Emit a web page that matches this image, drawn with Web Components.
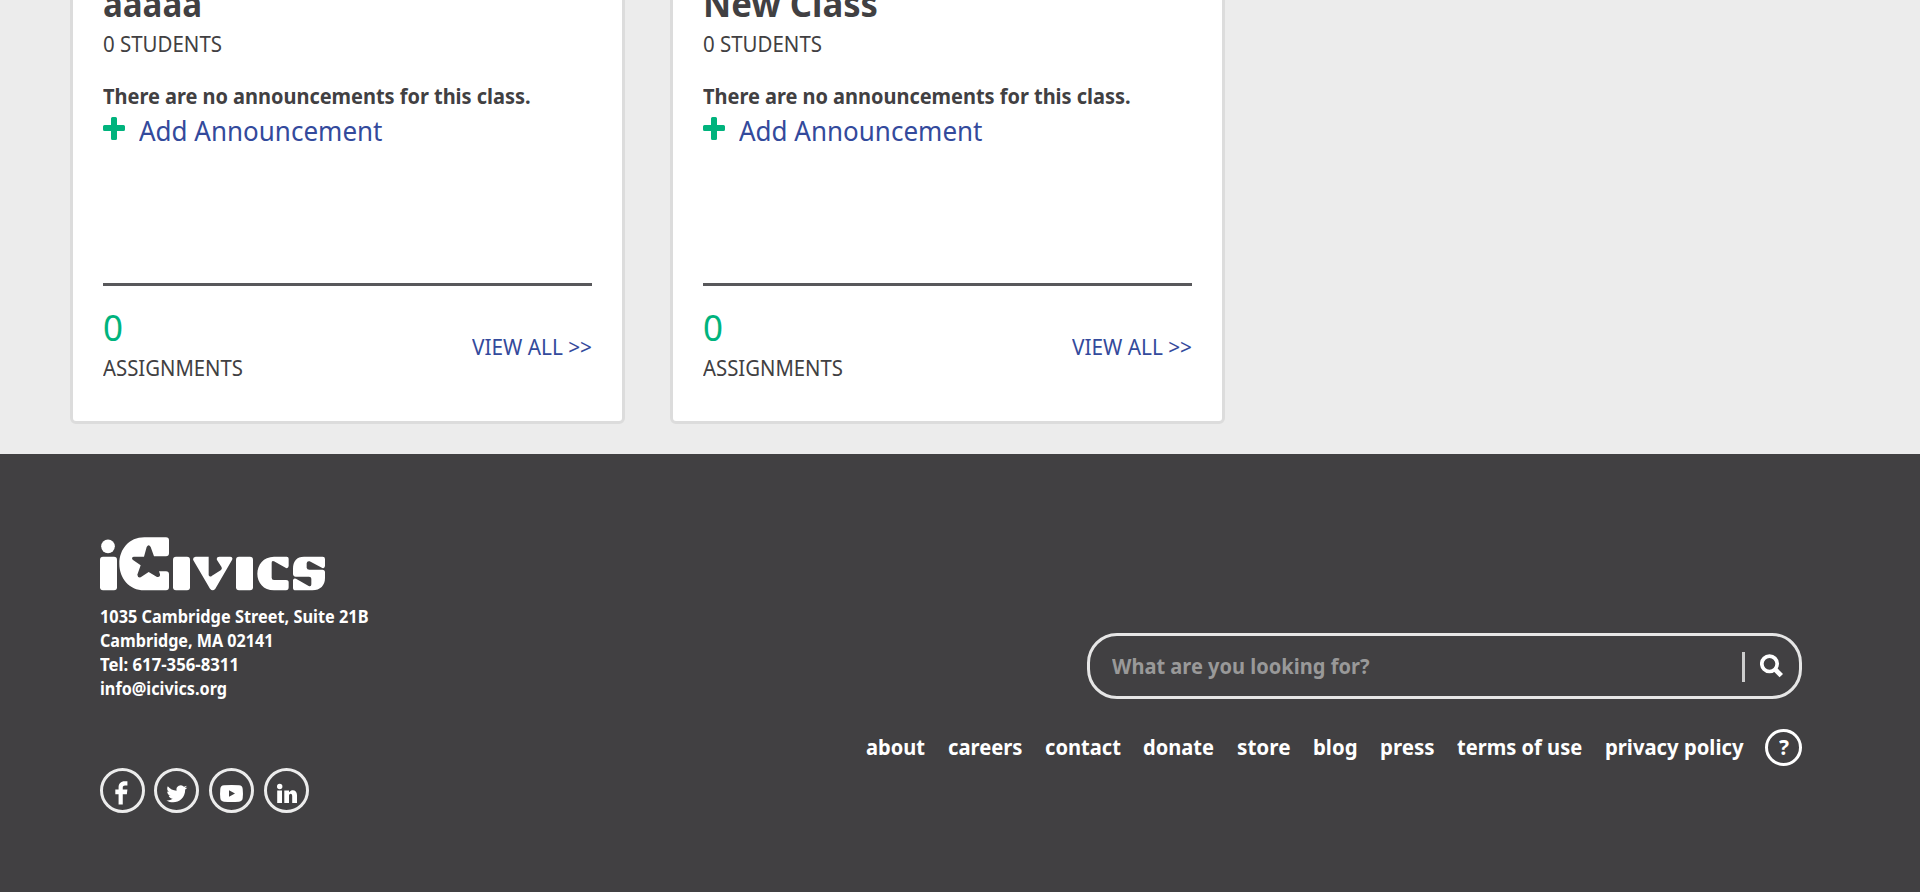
<!DOCTYPE html>
<html lang="en"><head><meta charset="utf-8"><title>iCivics</title>
<style>body{margin:0;background:#ececec;font-family:"Noto Sans",sans-serif;color:#414042;overflow:hidden}</style></head>
<body><civics-page></civics-page>
<script>
/* One line of text whose tracking is adjusted to fill a given width. */
customElements.define('fit-text', class extends HTMLElement{
  connectedCallback(){
    const w=+this.getAttribute('w'), s=+this.getAttribute('size'), lh=this.getAttribute('lh');
    const r=this.attachShadow({mode:'open'});
    r.innerHTML=`<style>:host{display:block;width:${w}px;height:${lh}px;line-height:${lh}px;font-size:${s}px;flex:none;white-space:nowrap}span{display:inline-block;transform-origin:0 50%}</style><span><slot></slot></span>`;
    const sp=r.querySelector('span'), n=this.textContent.length;
    const nat=sp.getBoundingClientRect().width;
    if(!nat) return;
    const k=Math.max(.93,Math.min(1.06,w/nat));
    sp.style.letterSpacing=((w/k-nat)/n)+'px';
    sp.style.transform=`scaleX(${k})`;
  }
});
customElements.define('class-card', class extends HTMLElement{
  connectedCallback(){
    this.attachShadow({mode:'open'}).innerHTML=`<style>
    :host{display:flex;flex-direction:column;box-sizing:border-box;width:555px;height:454px;margin-top:-30px;padding:10px 30px 0;background:#fff;border:3px solid #dcdcdc;border-radius:6px}
    .b{font-weight:700;margin-top:22px}
    .add{display:flex;margin-top:3px;color:#334a9c;gap:14px}
    svg{display:block;width:22px;height:23px;margin-top:3px}
    hr{margin:135px 0 0;border:0;height:3px;width:489px;background:#58585b}
    .foot{display:flex;justify-content:space-between;width:489px}
    .n{color:#00b37d;margin-top:19px}.v{color:#334a9c;margin-top:46px}
    </style>
    <slot name="title"></slot>
    <fit-text w="119" size="21.500" lh="30" style="margin-top:6px">0 STUDENTS</fit-text>
    <fit-text class="b" w="427.500" size="21.500" lh="30">There are no announcements for this class.</fit-text>
    <div class="add"><svg viewBox="0 0 22 23"><path d="M8 1.5Q8 0 9.500 0h3Q14 0 14 1.500V8h6.500Q22 8 22 9.500v3Q22 14 20.500 14H14v7.500Q14 23 12.500 23h-3Q8 23 8 21.500V14H1.500Q0 14 0 12.500v-3Q0 8 1.500 8H8z" fill="#00b37d"/></svg><fit-text w="243.500" size="26.500" lh="34">Add Announcement</fit-text></div>
    <hr><div class="foot"><div><fit-text class="n" w="20" size="35.500" lh="44">0</fit-text><fit-text w="140" size="21.500" lh="30" style="margin-top:4px">ASSIGNMENTS</fit-text></div><fit-text class="v" w="120" size="21.500" lh="30">VIEW ALL &gt;&gt;</fit-text></div>`;
  }
});
customElements.define('civics-logo', class extends HTMLElement{
  connectedCallback(){
    this.attachShadow({mode:'open'}).innerHTML=`<style>:host{display:block;width:226px;height:54px}svg{display:block}</style>
    <svg width="226" height="54" viewBox="30 35 678 162" fill="#fff"><circle cx="54" cy="63" r="20.500"/><rect x="30" y="94" width="51" height="101" rx="9"/>
    <path d="M163 36H228Q237 36 237 45V84Q237 93 228 93H192L182 65Q176 55 170 65L162 94H131Q123 96 128 103L152 120L142 148Q143 158 152 156L176 140L201 155Q211 157 210 147L207 138H228Q237 138 237 147V186Q237 195 228 195H163C117 195 88 158 88 115S117 36 163 36Z"/>
    <rect x="249" y="94" width="51" height="101" rx="9"/>
    <path d="M317 94H356V150Q360 157 366 151L392 135Q398 131 394 124L381 104Q378 94 388 94H421Q430 95 426 104L376 190Q368 200 360 190L310 105Q307 95 317 94Z"/>
    <rect x="438" y="94" width="51" height="101" rx="9"/>
    <path d="M552 94H590Q596 94 596 100V122Q595 130 588 128L552 108Q545 105 545 112V157Q545 164 552 164H588Q596 164 596 171V186Q596 195 588 195H552C520 195 502 171 502 145S520 94 552 94Z"/>
    <path d="M642 94H698Q705 94 705 101V122Q704 130 697 128L659 108Q651 106 650 114V127Q651 133 658 133H697Q705 133 705 141V158C705 180 691 195 667 195H617Q609 195 609 187V165Q610 157 618 160L656 182Q664 185 664 177V160Q664 154 657 154H617Q609 153 609 145V130C609 108 620 94 642 94Z"/></svg>`;
  }
});
const GLYPHS={
 facebook:'<path d="M17.500 36.500V25.500H14V20.500H17.500V18C17.500 14 20 11.500 24 11.500H27V16H24.500C22.500 16 22 17 22 18.500V20.500H27L26.400 25.500H22V36.500Z" transform="translate(2.300 2.500) scale(.93)"/>',
 twitter:'<path d="M33.300 19.400c-.9.400-1.600.6-2.400.7.900-.5 1.500-1.300 1.800-2.300-.8.500-1.700.8-2.700 1a4.300 4.300 0 0 0-7.400 3.900c-3.500-.2-6.700-1.900-8.800-4.500-1.200 2.100-.6 4.500 1.300 5.800-.7 0-1.400-.2-1.900-.5 0 2 1.400 3.800 3.400 4.200-.6.200-1.200.2-1.900.1.500 1.700 2.100 2.900 4 3a8.600 8.600 0 0 1-6.300 1.700c7.500 4.500 18.800.8 18.800-10.900.8-.6 1.500-1.300 2.100-2.200z"/>',
 youtube:'<path fill-rule="evenodd" d="M15 17.300Q22.500 16.500 30 17.300Q33.500 17.600 33.700 21Q34.200 25.500 33.700 30Q33.500 33.400 30 33.700Q22.500 34.500 15 33.700Q11.500 33.400 11.300 30Q10.800 25.500 11.300 21Q11.500 17.600 15 17.300ZM20 22.300V28.700L26 25.500Z"/>',
 linkedin:'<circle cx="15.700" cy="18.500" r="2.700"/><path d="M13.200 22.500H18V35H13.200ZM20.300 22.500H25V24.200C28 20.500 33 22 33 27V35H28.200V28C28.200 25 25 25 25 28V35H20.300Z"/>'};
customElements.define('social-icon', class extends HTMLElement{
  connectedCallback(){
    this.attachShadow({mode:'open'}).innerHTML=`<style>:host{display:block;width:45px;height:45px}svg{display:block}</style><svg width="45" height="45" viewBox="0 0 45 45" fill="#fff"><circle cx="22.500" cy="22.500" r="21" fill="none" stroke="#ececec" stroke-width="3"/>${GLYPHS[this.getAttribute('name')]}</svg>`;
  }
});
customElements.define('search-box', class extends HTMLElement{
  connectedCallback(){
    this.attachShadow({mode:'open'}).innerHTML=`<style>:host{display:flex;align-items:center;box-sizing:border-box;width:715px;height:66px;border:3px solid #e6e6e6;border-radius:30px;padding:0 15px 0 22px;color:#999;font-weight:700}
    i{width:3px;height:30px;background:#ccc;margin:2px 15px 0 auto}svg{display:block}</style><fit-text w="257.500" size="21.500" lh="34">What are you looking for?</fit-text><i></i><svg width="24" height="24" viewBox="0 0 24 24" fill="none" stroke="#fff"><circle cx="9.500" cy="9.800" r="7.700" stroke-width="3.700"/><path d="M15 15.300L21.300 21.600" stroke-width="4.800"/></svg>`;
  }
});
customElements.define('site-footer', class extends HTMLElement{
  connectedCallback(){
    const nav=[['about',59],['careers',74.5],['contact',76],['donate',71],['store',53.5],['blog',44.5],['press',54.5],['terms of use',125.2],['privacy policy',138.5]];
    this.attachShadow({mode:'open'}).innerHTML=`<style>:host{display:flex;justify-content:space-between;box-sizing:border-box;height:438px;padding:83px 118px 0 99.500px;background:#414042;color:#fff;font-weight:700}
    .addr{margin-top:14px}.soc{display:flex;gap:9.700px;margin-top:67px}
    .r{display:flex;flex-direction:column;align-items:flex-end;padding-top:96px}
    nav{display:flex;gap:22.500px;align-items:center;margin-top:30px}
    nav>fit-text{margin-top:-2px}
    .q{box-sizing:border-box;width:37px;height:37px;border:3px solid #fff;border-radius:50%;display:grid;place-items:center;margin-left:-.5px}</style>
    <div><civics-logo></civics-logo><div class="addr">
    <fit-text w="268.500" size="17" lh="24">1035 Cambridge Street, Suite 21B</fit-text><fit-text w="173.500" size="17" lh="24">Cambridge, MA 02141</fit-text><fit-text w="139" size="17" lh="24">Tel: 617-356-8311</fit-text><fit-text w="127" size="17" lh="24">info@icivics.org</fit-text></div>
    <div class="soc"><social-icon name="facebook"></social-icon><social-icon name="twitter"></social-icon><social-icon name="youtube"></social-icon><social-icon name="linkedin"></social-icon></div></div>
    <div class="r"><search-box></search-box><nav>${nav.map(([t,w])=>`<fit-text w="${w}" size="21.500" lh="34">${t}</fit-text>`).join('')}<div class="q"><fit-text w="10" size="21" lh="31">?</fit-text></div></nav></div>`;
  }
});
customElements.define('civics-page', class extends HTMLElement{
  connectedCallback(){
    this.attachShadow({mode:'open'}).innerHTML=`<style>:host{display:block;width:1920px;height:892px;overflow:hidden}.cards{display:flex;gap:45px;height:454px;padding-left:70px}.h{font-weight:700}</style>
    <div class="cards"><class-card><fit-text slot="title" class="h" w="99" size="35.500" lh="40">aaaaa</fit-text></class-card><class-card><fit-text slot="title" class="h" w="175" size="35.500" lh="40">New Class</fit-text></class-card></div><site-footer></site-footer>`;
  }
});
</script></body></html>
